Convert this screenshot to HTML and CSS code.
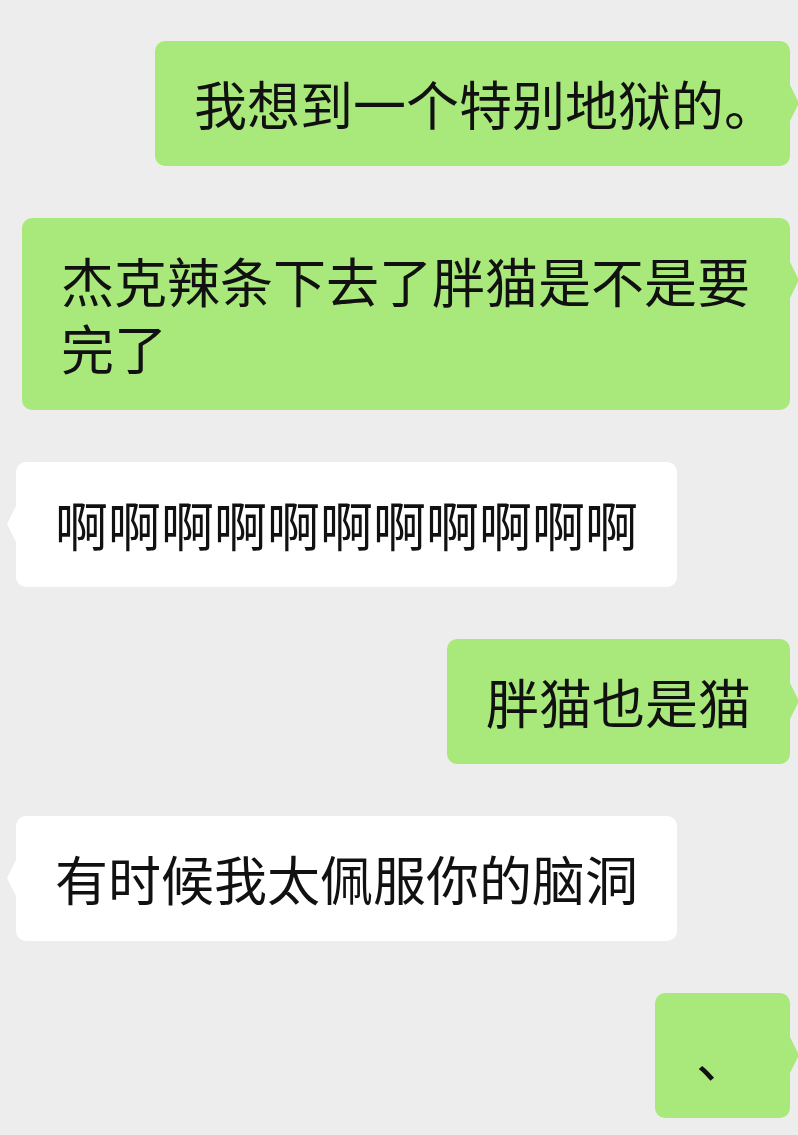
FILE: index.html
```html
<!DOCTYPE html>
<html lang="zh-CN">
<head>
    <meta charset="UTF-8">
    <meta name="viewport" content="width=device-width, initial-scale=1.0">
    <title>聊天</title>
    <link rel="stylesheet" href="styles.css">
</head>
<body>
    <div class="chat">
        <div class="msg me end-stop">我想到一个特别地狱的。</div>
        <div class="msg me">杰克辣条下去了胖猫是不是要完了</div>
        <div class="msg other">啊啊啊啊啊啊啊啊啊啊啊</div>
        <div class="msg me">胖猫也是猫</div>
        <div class="msg other">有时候我太佩服你的脑洞</div>
        <div class="msg me short">、</div>
    </div>
</body>
</html>
```

FILE: styles.css
```css
*{
    margin: 0;
    padding: 0;
    box-sizing: border-box;
}
body{
    background: #ededed;
    font-family: "Noto Sans CJK SC", "Noto Sans", sans-serif;
    color: #111;
}
.chat{
    display: flex;
    flex-direction: column;
    gap: 52px;
    padding: 41px 8px 18px 16px;
}
.msg{
    position: relative;
    max-width: 768px;
    padding: 29px 39px;
    border-radius: 10px;
    font-size: 53px;
    line-height: 67px;
}
/* 句号在原图里是半角宽，右边距收一点 */
.end-stop{
    padding-right: 13px;
}
.short{
    padding: 29px 41px;
}
.msg::after{
    content: "";
    position: absolute;
    top: 42px;
    width: 10px;
    height: 40px;
}
.me{
    align-self: flex-end;
    background: #a9e97c;
}
.me::after{
    right: -9px;
    background: #a9e97c;
    clip-path: polygon(0 0, 100% 50%, 0 100%);
}
.other{
    align-self: flex-start;
    background: #fff;
}
.other::after{
    left: -9px;
    background: #fff;
    clip-path: polygon(100% 0, 0 50%, 100% 100%);
}
```
